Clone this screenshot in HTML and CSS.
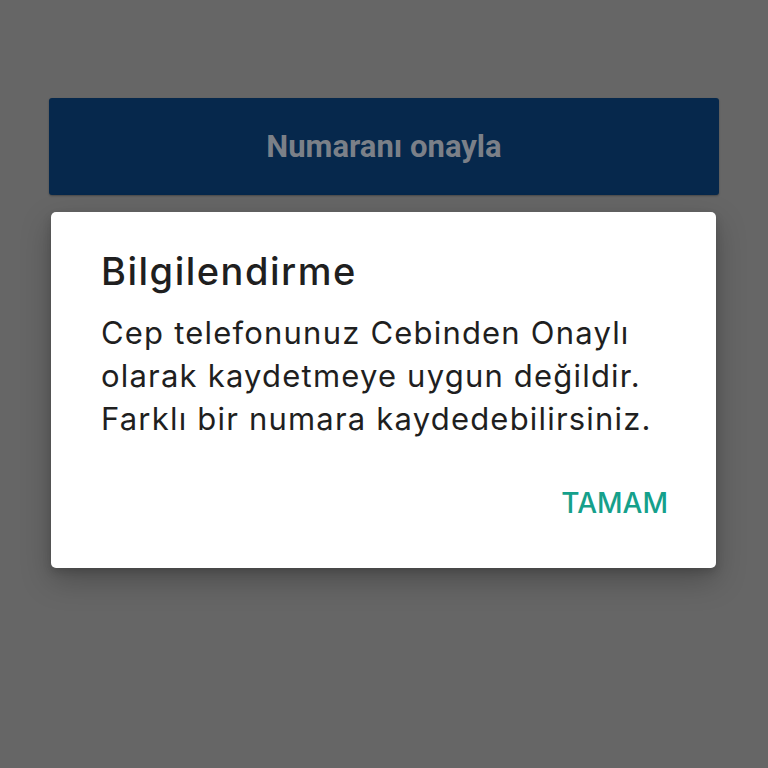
FILE: index.html
```html
<!DOCTYPE html>
<html lang="tr">
<head>
  <meta charset="UTF-8" />
  <meta name="viewport" content="width=device-width, initial-scale=1" />
  <title>Numaranı onayla</title>
  <link rel="stylesheet" href="styles.css">
</head>
<body>
  <div class="screen">
    <button class="confirm-btn">Numaranı onayla</button>

    <div class="dialog">
      <h2 class="dialog-title">Bilgilendirme</h2>
      <p class="dialog-text">Cep telefonunuz Cebinden Onaylı olarak kaydetmeye uygun değildir. Farklı bir numara kaydedebilirsiniz.</p>
      <div class="dialog-actions">
        <button class="text-btn">TAMAM</button>
      </div>
    </div>
  </div>
</body>
</html>
```

FILE: styles.css
```css
* { box-sizing: border-box; }
body {
  margin: 0;
  background: #666666;
  font-family: Inter, 'Noto Sans', sans-serif;
}
.screen {
  width: 768px;
  height: 768px;
  padding-top: 98px;
  display: flex;
  flex-direction: column;
}
.confirm-btn {
  margin-left: 49px;
  width: 670px;
  height: 97px;
  border: none;
  border-radius: 3px;
  background: #06284c;
  color: #7b8088;
  font-family: Roboto, sans-serif;
  font-weight: 700;
  font-size: 31px;
  box-shadow: 0 1px 2px rgba(0,0,0,0.3);
}
.dialog {
  margin-top: 17px;
  margin-left: 51px;
  width: 665px;
  height: 356px;
  background: #fff;
  border-radius: 5px;
  padding: 37px 40px 0 50px;
  box-shadow: 0 12px 30px rgba(0,0,0,0.25), 0 4px 8px rgba(0,0,0,0.15);
}
.dialog-title {
  margin: 0;
  font-size: 38px;
  font-weight: 500;
  line-height: 44px;
  letter-spacing: 1.5px;
  color: #1f1f1f;
}
.dialog-text {
  margin: 18px 0 0;
  font-size: 31px;
  line-height: 43px;
  letter-spacing: 1.2px;
  color: #1f1f1f;
}
.dialog-actions {
  display: flex;
  justify-content: flex-end;
  margin-top: 46px;
  padding-right: 8px;
}
.text-btn {
  border: none;
  background: none;
  padding: 0;
  color: #15a08b;
  font-family: Inter, sans-serif;
  font-size: 28px;
  font-weight: 500;
}
```
